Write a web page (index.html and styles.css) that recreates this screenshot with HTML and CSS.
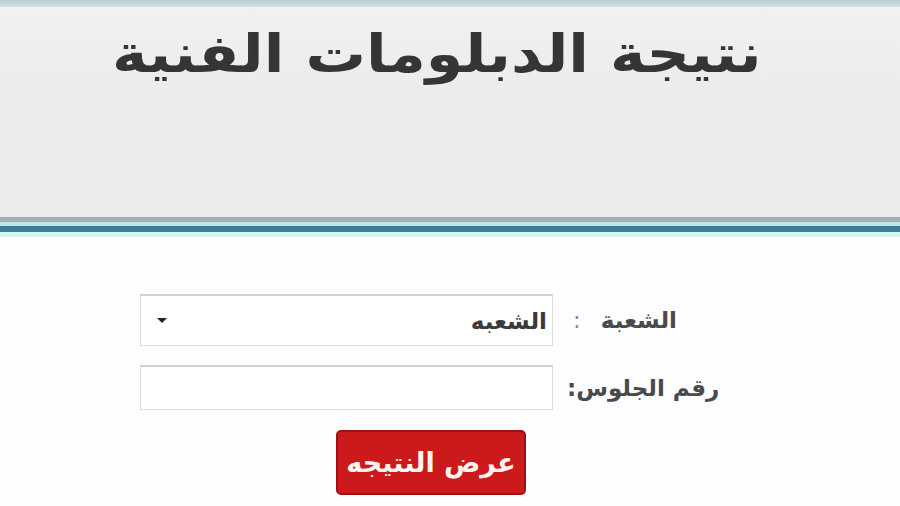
FILE: index.html
```html
<!DOCTYPE html>
<html lang="ar">
<head>
<meta charset="utf-8">
<link rel="stylesheet" href="styles.css">
</head>
<body>
<div class="topband"></div>
<header class="header">
  <h1 class="title" dir="rtl">نتيجة الدبلومات الفنية</h1>
</header>
<div class="rule">
  <div class="r1"></div><div class="r2"></div><div class="r3"></div><div class="r4"></div>
</div>
<main class="form">
  <div class="row">
    <div class="select">
      <span class="caret"></span>
      <span class="seltext" dir="rtl">الشعبه</span>
    </div>
    <label class="lbl lbl1" dir="rtl">الشعبة <span class="colon">:</span></label>
  </div>
  <div class="row row2">
    <div class="input"></div>
    <label class="lbl" dir="rtl">رقم الجلوس:</label>
  </div>
  <div class="btnrow">
    <button class="btn" dir="rtl">عرض النتيجه</button>
  </div>
</main>
</body>
</html>
```
FILE: styles.css
```css
html, body { margin: 0; padding: 0; }
body {
  width: 900px;
  height: 506px;
  overflow: hidden;
  background: #fdfdff;
  font-family: "DejaVu Sans", sans-serif;
}
.topband {
  height: 7px;
  background: linear-gradient(#b9c9d2, #d6e0e6);
}
.header {
  height: 210px;
  background: linear-gradient(#f1f1f2, #ececee 40%, #ebebed);
  display: flex;
  align-items: flex-start;
}
.title {
  margin: 10px 0 0 112px;
  font-size: 53px;
  font-weight: bold;
  color: #353535;
  line-height: 74px;
  transform: scaleX(1.137);
  transform-origin: left center;
}
.rule .r1 { height: 5px; background: #a3adb3; }
.rule .r2 { height: 4px; background: #bde6ee; }
.rule .r3 { height: 6px; background: #3c7f94; }
.rule .r4 { height: 5px; background: #d8f5fa; }
.form {
  width: 582px;
  margin: 57px 0 0 140px;
}
.row {
  display: flex;
  align-items: center;
  gap: 14px;
}
.row2 { margin-top: 19px; }
.select, .input {
  width: 413px;
  box-sizing: border-box;
  border: 1px solid #dcdcdc;
  border-top: 2px solid #d2d2d2;
  background: #fff;
  flex: none;
}
.select {
  height: 52px;
  display: flex;
  align-items: center;
  justify-content: space-between;
  padding: 0 5px 0 16px;
}
.input { height: 45px; }
.caret {
  width: 0; height: 0;
  border-left: 5px solid transparent;
  border-right: 5px solid transparent;
  border-top: 5px solid #222;
}
.seltext {
  font-size: 23px;
  font-weight: bold;
  color: #3a3a3a;
}
.lbl {
  font-size: 23px;
  font-weight: bold;
  color: #4a4a4a;
}
.lbl1 { margin-left: 6px; }
.colon { margin-right: 12px; color: #8a8a8a; font-weight: normal; }
.btnrow {
  display: flex;
  justify-content: center;
  margin-top: 20px;
}
.btn {
  width: 190px;
  height: 65px;
  background: #cc1a1c;
  border: 2px solid #9e1012;
  border-radius: 5px;
  color: #fff4f2;
  font-family: "DejaVu Sans", sans-serif;
  font-size: 27px;
  font-weight: bold;
  padding: 0;
}
```
